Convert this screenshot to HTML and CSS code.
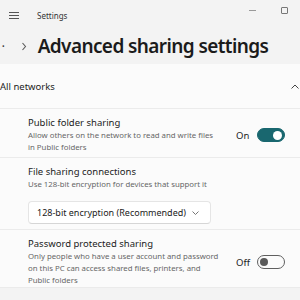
FILE: index.html
```html
<!DOCTYPE html>
<html lang="en">

<head>
    <meta charset="UTF-8">
    <meta name="viewport" content="width=device-width, initial-scale=1.0">
    <title>Advanced sharing settings</title>
    <link rel="stylesheet" href="styles.css">
</head>

<body>
    <div class="titlebar">
        <div class="menu">
            <span></span><span></span><span></span>
        </div>
        <div class="app-name">Settings</div>
        <div class="win-controls">
            <span class="min"></span>
            <span class="max"></span>
        </div>
    </div>

    <div class="crumbs">
        <span class="crumb-more">•</span>
        <svg class="crumb-sep" width="6" height="9" viewBox="0 0 6 9">
            <path d="M1.5 1 L4.5 4.5 L1.5 8" fill="none" stroke="#5a5a5a" stroke-width="1.1" />
        </svg>
        <h1>Advanced sharing settings</h1>
    </div>

    <div class="card">
        <div class="card-head">
            <span>All networks</span>
            <svg width="8" height="5" viewBox="0 0 8 5">
                <path d="M0.5 4.5 L4 1 L7.5 4.5" fill="none" stroke="#444" stroke-width="1" />
            </svg>
        </div>

        <div class="row first">
            <div class="text">
                <div class="label">Public folder sharing</div>
                <div class="desc">Allow others on the network to read and write files<br>in Public folders</div>
            </div>
            <div class="state">On</div>
            <div class="toggle on"><span></span></div>
        </div>

        <div class="row middle">
            <div class="text">
                <div class="label">File sharing connections</div>
                <div class="desc">Use 128-bit encryption for devices that support it</div>
                <div class="select">
                    <span>128-bit encryption (Recommended)</span>
                    <svg width="7" height="4" viewBox="0 0 7 4">
                        <path d="M0.5 0.5 L3.5 3.5 L6.5 0.5" fill="none" stroke="#666" stroke-width="0.9" />
                    </svg>
                </div>
            </div>
        </div>

        <div class="row last">
            <div class="text">
                <div class="label">Password protected sharing</div>
                <div class="desc">Only people who have a user account and password<br>on this PC can access shared files, printers, and<br>Public folders</div>
            </div>
            <div class="state">Off</div>
            <div class="toggle"><span></span></div>
        </div>
    </div>
</body>

</html>
```

FILE: styles.css
```css
body {
    margin: 0;
    background-color: #f3f3f3;
    font-family: 'Noto Sans', 'Open Sans', sans-serif;
    color: #1b1b1b;
    width: 300px;
    height: 300px;
    overflow: hidden;
}

.titlebar {
    display: flex;
    align-items: center;
    height: 31px;
    padding-left: 9px;
}

.menu {
    display: flex;
    flex-direction: column;
    gap: 2px;
    width: 10px;
}

.menu span {
    display: block;
    height: 1px;
    background-color: #555;
}

.app-name {
    margin-left: 18px;
    font-size: 8px;
    color: #333;
}

.win-controls {
    margin-left: auto;
    display: flex;
    align-items: center;
    gap: 25px;
    padding-right: 12px;
    margin-top: -10px;
}

.min {
    display: block;
    width: 7px;
    height: 1px;
    background-color: #999;
}

.max {
    display: block;
    width: 5px;
    height: 5px;
    border: 1px solid #777;
    border-radius: 1px;
}

.crumbs {
    display: flex;
    align-items: center;
    height: 30px;
    padding-left: 2px;
}

.crumb-more {
    font-size: 7px;
    color: #444;
}

.crumb-sep {
    margin-left: 16px;
}

h1 {
    margin: 0 0 0 11px;
    font-size: 19px;
    font-weight: 600;
    letter-spacing: -0.6px;
    color: #1b1b1b;
}

.card {
    margin-top: 3px;
    background-color: #fbfbfb;
}

.card-head {
    display: flex;
    align-items: center;
    justify-content: space-between;
    height: 44px;
    padding-right: 1px;
    font-size: 9.5px;
    border-bottom: 1px solid #ebebeb;
}

.row {
    display: flex;
    align-items: center;
    padding: 8px 0 4px 28px;
    border-bottom: 1px solid #ebebeb;
}

.row.middle {
    padding-bottom: 5px;
}

.row.last {
    padding-bottom: 1px;
}

.text {
    flex: 1;
}

.label {
    font-size: 9.5px;
    line-height: 12px;
}

.desc {
    font-size: 7.8px;
    line-height: 12px;
    color: #666;
}

.state {
    font-size: 9.5px;
    width: 21px;
}

.toggle {
    box-sizing: border-box;
    width: 28px;
    height: 14px;
    margin-right: 15px;
    border-radius: 7px;
    border: 1px solid #5f5f5f;
    display: flex;
    align-items: center;
    padding: 0 2px;
}

.toggle span {
    display: block;
    width: 8px;
    height: 8px;
    border-radius: 50%;
    background-color: #5a5a5a;
}

.toggle.on {
    background-color: #19676f;
    border-color: #19676f;
    justify-content: flex-end;
}

.toggle.on span {
    background-color: #fff;
    width: 9px;
    height: 9px;
}

.select {
    box-sizing: border-box;
    display: flex;
    align-items: center;
    justify-content: space-between;
    width: 183px;
    height: 23px;
    margin-top: 11px;
    padding: 0 11px 0 8px;
    background-color: #fff;
    border: 1px solid #e5e5e5;
    border-bottom-color: #d6d6d6;
    border-radius: 4px;
    font-size: 9px;
}
```
